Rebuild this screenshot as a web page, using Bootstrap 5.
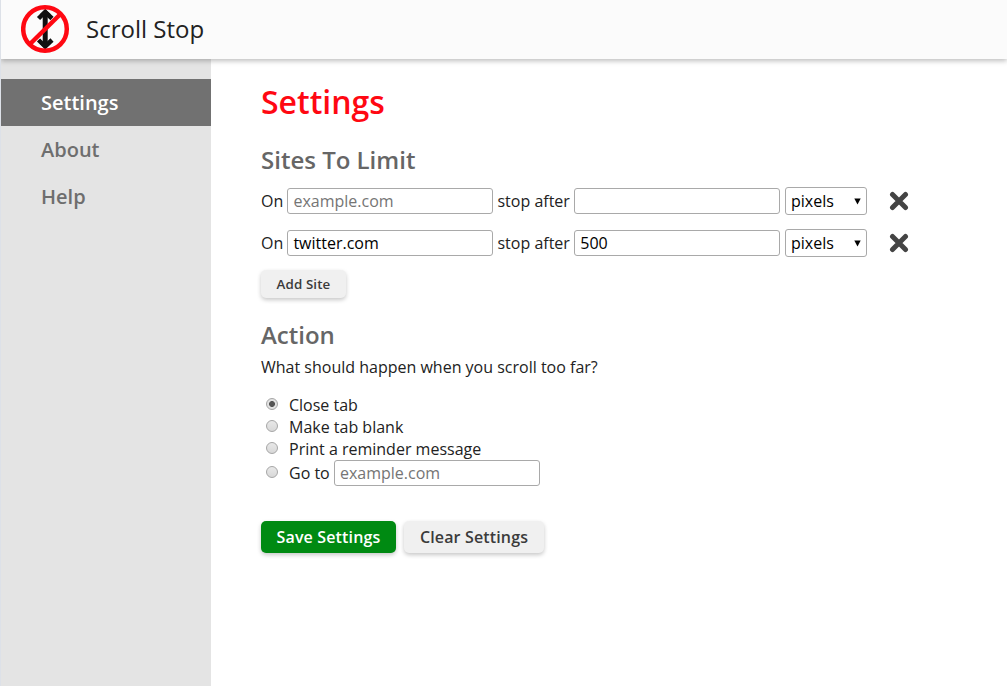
<!DOCTYPE html>
<html lang="en">
<head>
<meta charset="utf-8">
<meta name="viewport" content="width=device-width, initial-scale=1">
<title>Scroll Stop</title>
<link href="https://cdn.jsdelivr.net/npm/bootstrap@5.3.0/dist/css/bootstrap.min.css" rel="stylesheet">
<style>
body { font-family: "Open Sans", sans-serif; font-size: 16px; line-height: 22px; color: #222; background: #fff; border-left: 1px solid #dde1e8; overflow: hidden; }
.topbar { height: 59px; background: #fbfbfb; box-shadow: 0 2px 5px rgba(0,0,0,.26); padding: 0 0 1px 20px; z-index: 2; }
.brand-name { font-size: 24px; line-height: 32px; margin-left: 16px; color: #222; }
.sidebar { width: 210px; background: #e4e4e4; padding-top: 20px; }
.sidebar .nav-link { height: 47px; padding: 0 0 0 40px; font-size: 20px; font-weight: 600; line-height: 47px; color: #6e6e6e; border-radius: 0; }
.sidebar .nav-link.active { background: #717171; color: #fff; }
.content { padding: 20px 0 0 50px; }
h1 { font-size: 32px; line-height: 44px; font-weight: 600; color: #ff0812; margin: 1px 0 20px; }
h2 { font-size: 24px; line-height: 32px; font-weight: 600; color: #666; margin: 0; }
.field { width: 206px; height: 26px; min-height: 0; padding: 0 5px; font-size: 16px; line-height: 22px; border: 1px solid #a9a9a9; border-radius: 3px; color: #000; background: #fff; }
.field::placeholder { color: #757575; opacity: 1; }
.site-row { height: 28px; margin-bottom: 14px; }
.label-on { width: 26.4px; }
.label-stop { width: 80.9px; padding-left: 4.100px; }
.unit { width: 82px; height: 28px; margin-left: 4.700px; padding: 0 5px; border: 1px solid #a9a9a9; border-radius: 3px; color: #000; background: #fff; }
.remove { margin-left: 22px; line-height: 0; }
.soft-btn { border: 0; border-radius: 5px; font-weight: 600; color: #3b3b3b; background: #f0f0f0; box-shadow: 0 2px 4px rgba(0,0,0,.22); }
.soft-btn:hover { background: #e8e8e8; }
.add-btn { width: 85px; height: 28px; padding: 0; font-size: 13.333px; line-height: 28px; letter-spacing: .12px; }
.main-btn { height: 32px; padding: 0; font-size: 16px; line-height: 32px; letter-spacing: .15px; }
.save-btn { width: 135px; background: #008a12; color: #fff; }
.save-btn:hover { background: #007a10; color: #fff; }
.clear-btn { width: 140px; margin-left: 8px; }
.radio-dot { appearance: none; width: 12px; height: 12px; margin: 0 11px 2px 5px; border: 1px solid #a6a6a6; border-radius: 50%; background: linear-gradient(#e8e8e8, #d8d8d8); flex: none; }
.radio-dot:checked { background: radial-gradient(circle, #555 0 2.6px, #e2e2e2 3.3px); }
.choice { height: 22px; }
.choice-goto { height: 26px; }
</style>
</head>
<body class="vh-100 d-flex flex-column">
<header class="topbar d-flex align-items-center position-relative flex-shrink-0">
  <svg width="49" height="50" viewBox="0 0 49 50" aria-hidden="true">
    <path d="M24.200 8V42" stroke="#111" stroke-width="5"/>
    <path d="M17.500 14.500L24.200 8L31 14.500M17.500 36L24.200 42.500L31 36" fill="none" stroke="#111" stroke-width="4.500"/>
    <path d="M24.200 5L30 10.500H18.500ZM24.200 45L30 39.500H18.500Z" fill="#111"/>
    <circle cx="24" cy="25" r="21.800" fill="none" stroke="#ff0812" stroke-width="4.500"/>
    <path d="M9 40L39.500 10" stroke="#ff0812" stroke-width="4.500"/>
  </svg>
  <span class="brand-name">Scroll Stop</span>
</header>
<div class="d-flex flex-grow-1">
  <nav class="sidebar nav flex-column flex-shrink-0">
    <a class="nav-link active" href="#">Settings</a>
    <a class="nav-link" href="#">About</a>
    <a class="nav-link" href="#">Help</a>
  </nav>
  <main class="content flex-grow-1">
    <h1>Settings</h1>
    <h2>Sites To Limit</h2>
    <div class="site-row d-flex align-items-center" style="margin-top:11px">
      <span class="label-on">On</span><input class="field" placeholder="example.com" aria-label="Site">
      <span class="label-stop">stop after</span><input class="field" aria-label="Limit">
      <div class="unit d-flex align-items-center justify-content-between" role="button"><span>pixels</span><svg width="7" height="7" viewBox="0 0 7 7"><path d="M.3.5H6.700L3.500 6.500Z"/></svg></div>
      <a class="remove" href="#" aria-label="Remove"><svg width="20" height="20" viewBox="0 0 20 20"><path d="M3.500 3.500L16.500 16.500M16.500 3.500L3.500 16.500" stroke="#444" stroke-width="5" stroke-linecap="round"/></svg></a>
    </div>
    <div class="site-row d-flex align-items-center">
      <span class="label-on">On</span><input class="field" value="twitter.com" aria-label="Site">
      <span class="label-stop">stop after</span><input class="field" value="500" aria-label="Limit">
      <div class="unit d-flex align-items-center justify-content-between" role="button"><span>pixels</span><svg width="7" height="7" viewBox="0 0 7 7"><path d="M.3.5H6.700L3.500 6.500Z"/></svg></div>
      <a class="remove" href="#" aria-label="Remove"><svg width="20" height="20" viewBox="0 0 20 20"><path d="M3.500 3.500L16.500 16.500M16.500 3.500L3.500 16.500" stroke="#444" stroke-width="5" stroke-linecap="round"/></svg></a>
    </div>
    <button class="btn soft-btn add-btn d-block" type="button" style="margin-top:-1px">Add Site</button>
    <h2 style="margin-top:21px">Action</h2>
    <p style="margin:5px 0 16px">What should happen when you scroll too far?</p>
    <label class="choice d-flex align-items-center"><input class="radio-dot" type="radio" name="action" checked>Close tab</label>
    <label class="choice d-flex align-items-center"><input class="radio-dot" type="radio" name="action">Make tab blank</label>
    <label class="choice d-flex align-items-center"><input class="radio-dot" type="radio" name="action">Print a reminder message</label>
    <label class="choice-goto d-flex align-items-center"><input class="radio-dot" type="radio" name="action">Go to<input class="field" style="margin-left:4.200px" placeholder="example.com" aria-label="Address"></label>
    <div class="d-flex" style="margin-top:35px">
      <button class="btn soft-btn main-btn save-btn" type="button">Save Settings</button>
      <button class="btn soft-btn main-btn clear-btn" type="button">Clear Settings</button>
    </div>
  </main>
</div>
<script src="https://cdn.jsdelivr.net/npm/bootstrap@5.3.0/dist/js/bootstrap.bundle.min.js"></script>
</body>
</html>
